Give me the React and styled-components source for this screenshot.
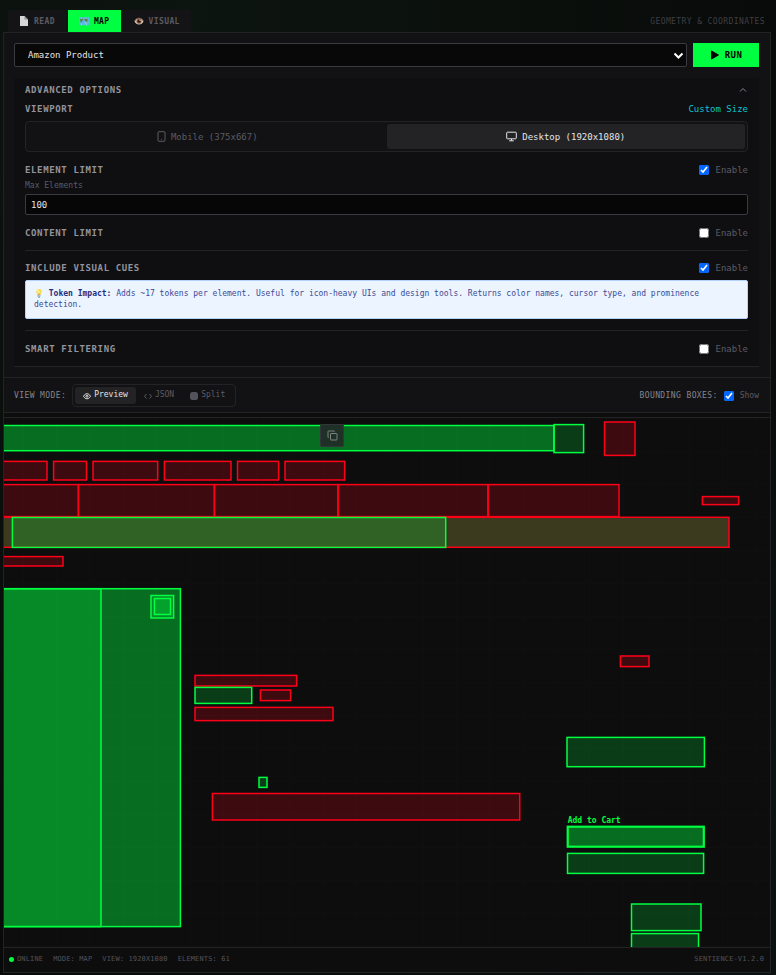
import React, { useState } from 'react';
import styled, { createGlobalStyle, css } from 'styled-components';

const GlobalStyle = createGlobalStyle`
  * {
    box-sizing: border-box;
  }

  body {
    margin: 0;
    background-color: #080a09;
    background-image: radial-gradient(ellipse at 25% 0%, #0d1510 0%, transparent 75%),
      radial-gradient(ellipse at 100% 80%, #0a1413 0%, transparent 50%);
    font-family: "DejaVu Sans Mono", "Noto Color Emoji", monospace;
    color: #e4e4e7;
  }

  button, input, select {
    font-family: inherit;
    margin: 0;
  }
`;

const Page = styled.div`
  padding: 10px 5px 2px 3px;
`;

const TopBar = styled.header`
  display: flex;
  align-items: center;
  justify-content: space-between;
  padding: 0 6px 0 5px;
`;

const TabList = styled.nav`
  display: flex;
  gap: 2px;
`;

const Tab = styled.button`
  display: flex;
  align-items: center;
  gap: 5px;
  height: 22px;
  padding: 0 11px;
  border: 0;
  background: ${({ $active }) => ($active ? '#00ff41' : '#141416')};
  color: ${({ $active }) => ($active ? '#000' : '#5b5b63')};
  font-size: 8px;
  font-weight: 700;
  letter-spacing: 0.05em;
  cursor: pointer;
`;

const Hint = styled.span`
  color: #3f3f46;
  font-size: 8px;
  letter-spacing: 0.05em;
`;

const Panel = styled.main`
  border: 1px solid #232326;
  background: #0d0d0d;
`;

const Controls = styled.section`
  padding: 10px 11px 10px 10px;
  background: #121214;
  border-bottom: 1px solid #232326;
`;

const RunRow = styled.div`
  display: flex;
  gap: 6px;
  margin-bottom: 11px;
`;

const SelectWrap = styled.div`
  position: relative;
  flex: 1;

  svg {
    position: absolute;
    right: 3px;
    top: 7px;
    pointer-events: none;
  }
`;

const SiteSelect = styled.select`
  appearance: none;
  display: block;
  width: 100%;
  height: 24px;
  padding: 0 13px;
  border: 1px solid #3a3a40;
  border-radius: 2px;
  background: #080808;
  color: #e4e4e7;
  font-size: 9px;
`;

const RunButton = styled.button`
  display: flex;
  align-items: center;
  justify-content: center;
  gap: 5px;
  width: 66px;
  height: 24px;
  padding: 0;
  border: 0;
  background: #00ff41;
  color: #000;
  font-size: 9px;
  font-weight: 700;
  letter-spacing: 0.05em;
  cursor: pointer;
`;

const Options = styled.div`
  display: flex;
  flex-direction: column;
  padding: 5px 11px 10px;
  border-bottom: 1px solid #232326;
  background: #0f0f11;
`;

const OptionRow = styled.div`
  display: flex;
  align-items: center;
  justify-content: space-between;
  height: 14px;
  margin-bottom: ${({ $gap }) => $gap || 0}px;
`;

const OptionTitle = styled.h3`
  margin: 0;
  color: #93939c;
  font-size: 9px;
  font-weight: 700;
  letter-spacing: 0.07em;
`;

const PlainButton = styled.button`
  display: flex;
  padding: 0;
  border: 0;
  background: none;
  color: ${({ $color }) => $color};
  font-size: 9px;
  cursor: pointer;
`;

const Segmented = styled.div`
  display: flex;
  border: 1px solid #232326;
  border-radius: 4px;
  padding: 2px;
  background: #121214;
`;

const ViewportGroup = styled(Segmented)`
  height: 31px;
  margin-bottom: 11px;
`;

const segment = css`
  display: flex;
  align-items: center;
  justify-content: center;
  border: 0;
  border-radius: 3px;
  background: ${({ $active }) => ($active ? '#232325' : 'transparent')};
  color: ${({ $active }) => ($active ? '#e4e4e7' : '#5b5b63')};
  cursor: pointer;
`;

const ViewportButton = styled.button`
  ${segment}
  flex: 1;
  gap: 5px;
  font-size: 9px;
`;

const ModeGroup = styled(Segmented)`
  height: 23px;
`;

const ModeButton = styled.button`
  ${segment}
  gap: 3px;
  padding: 0 8px 2px;
  font-size: 8px;

  svg {
    margin-top: 2px;
  }
`;

const CheckLabel = styled.label`
  display: flex;
  align-items: center;
  gap: 6px;
  color: #5b5b63;
  font-size: ${({ $small }) => ($small ? 8 : 9)}px;
`;

const Checkbox = styled.input.attrs({ type: 'checkbox' })`
  width: 10px;
  height: 10px;
  accent-color: #0066ff;
`;

const FieldLabel = styled.label`
  height: 12px;
  margin: 3px 0 2px;
  color: #5b5b63;
  font-size: 8px;
  line-height: 12px;
`;

const LimitInput = styled.input`
  width: 100%;
  height: 21px;
  margin-bottom: 11px;
  padding: 0 5px;
  border: 1px solid #3a3a40;
  border-radius: 2px;
  background: #060606;
  color: #e4e4e7;
  font-size: 9px;
`;

const Divider = styled.hr`
  width: 100%;
  height: 1px;
  margin: 0 0 ${({ $after }) => $after}px;
  border: 0;
  background: #232326;
`;

const Notice = styled.p`
  min-height: 39px;
  margin: 0 0 11px;
  padding: 7px 8px;
  border: 1px solid #b4d3fb;
  border-radius: 2px;
  background: #ecf4ff;
  color: #3b4a94;
  font-size: 8px;
  line-height: 11px;

  strong {
    color: #1e2f80;
  }
`;

const Bulb = styled.span`
  opacity: 0.7;
`;

const ViewBar = styled.section`
  display: flex;
  align-items: center;
  justify-content: space-between;
  padding: 6px 11px 5px 10px;
  border-bottom: 1px solid #232326;
  background: #121214;
`;

const BarGroup = styled.div`
  display: flex;
  align-items: center;
  gap: 6px;
`;

const BarLabel = styled.span`
  color: #85858e;
  font-size: 8px;
  letter-spacing: 0.05em;
`;

const Preview = styled.section`
  position: relative;
  margin-top: 4px;
  border-top: 1px solid #232326;
  background-color: #0d0d0d;
  background-image: linear-gradient(#0f0f0f 1px, transparent 1px),
    linear-gradient(90deg, #0f0f0f 1px, transparent 1px);
  background-size: calc(100% / 23) 33px;
  background-position: 19px 0;
`;

const Overlay = styled.svg`
  display: block;
  width: 100%;
  height: auto;
  font-family: "DejaVu Sans Mono", monospace;
  font-size: 8px;
  font-weight: 700;
`;

const CopyButton = styled.button`
  position: absolute;
  top: 6px;
  left: 316px;
  display: flex;
  align-items: center;
  justify-content: center;
  width: 24px;
  height: 23px;
  padding: 0;
  border: 1px solid #32353a;
  border-radius: 2px;
  background: #1f3127;
  color: #7c8480;
  cursor: pointer;
`;

const StatusBar = styled.footer`
  display: flex;
  align-items: center;
  justify-content: space-between;
  height: 25px;
  padding: 0 6px 2px 5px;
  border-top: 1px solid #232326;
  color: #52525b;
  font-size: 7px;
  letter-spacing: 0.02em;
`;

const StatusList = styled.div`
  display: flex;
  gap: 10px;
`;

const Online = styled.span`
  display: flex;
  align-items: center;
  gap: 3px;

  &::before {
    content: "";
    width: 5px;
    height: 5px;
    border-radius: 50%;
    background: #00ff41;
  }
`;

const GREEN = '#00ff41';
const RED = '#ff0019';

// x1, y1, x2, y2 of every detected element, drawn in order
const boxes = [
  { c: GREEN, at: [-10, 425.5, 554, 450.7], fill: 0.4 },
  { c: GREEN, at: [554, 424.6, 583.6, 452.6] },
  { c: RED, at: [604.5, 422, 635, 455.4] },
  { c: RED, at: [-10, 461.4, 47, 480] },
  { c: RED, at: [53.6, 461.4, 86.5, 480] },
  { c: RED, at: [93, 461.4, 157.7, 480] },
  { c: RED, at: [164.4, 461.4, 231, 480] },
  { c: RED, at: [237.5, 461.4, 278.6, 480] },
  { c: RED, at: [285, 461.4, 344.6, 480] },
  { c: RED, at: [-10, 484.6, 78.4, 516.6] },
  { c: RED, at: [78.4, 484.6, 214.4, 516.6] },
  { c: RED, at: [214.4, 484.6, 338, 516.6] },
  { c: RED, at: [338, 484.6, 488, 516.6] },
  { c: RED, at: [488, 484.6, 619, 516.6] },
  { c: RED, at: [702.4, 496.6, 738.6, 504.6] },
  { c: RED, at: [-10, 517.3, 729, 547.3], paint: '#3c3a1e' },
  { c: GREEN, at: [12.4, 517.5, 445.7, 547.4] },
  { c: RED, at: [-10, 556.6, 63, 566] },
  { c: GREEN, at: [-10, 588.7, 180.4, 926.6], fill: 0.4 },
  { c: GREEN, at: [-10, 588.7, 101, 926.6] },
  { c: GREEN, at: [151, 595.5, 173.6, 618] },
  { c: GREEN, at: [154.4, 598.5, 170.5, 614.5] },
  { c: RED, at: [195, 675.4, 296.6, 686] },
  { c: GREEN, at: [195, 687.4, 251.7, 703.4] },
  { c: RED, at: [260.4, 690, 290.6, 700.6] },
  { c: RED, at: [195, 707.4, 333, 720.6] },
  { c: GREEN, at: [259, 777.4, 267, 787.4] },
  { c: RED, at: [212.4, 793.5, 519.7, 820] },
  { c: RED, at: [620.4, 656, 649, 666.6] },
  { c: GREEN, at: [567, 737.4, 704.4, 766.7] },
  { c: GREEN, at: [567.7, 826.7, 703.8, 846.7], fill: 0.4, stroke: 2.2, label: 'Add to Cart' },
  { c: GREEN, at: [567.5, 853.4, 703.6, 873.4] },
  { c: GREEN, at: [631.5, 904, 701, 930.6] },
  { c: GREEN, at: [631.5, 933.6, 698.5, 960] },
];

const PageIcon = () => (
  <svg width="10" height="10" viewBox="0 0 20 20">
    <path d="M2 0h9l7 7v13H2Z" fill="#d6d6d6" />
    <path d="M11 0v7h7Z" fill="#8f8f8f" />
  </svg>
);

const MapIcon = () => (
  <svg width="10" height="10" viewBox="0 0 20 20">
    <path d="M0 2l5 1 5-1 5 1 5-1v16l-5 1-5-1-5 1-5-1Z" fill="#5cb8e6" />
    <path d="M2 6l5-1 2 3-3 2-1 4-2-3ZM11 6l6-1v5l-3 2-2-2Z" fill="#5b7d35" />
    <path d="M5 3v4M15 3v3M5 15v4M15 15v4" stroke="#a5dcf5" />
    <path d="M12 12l2-1 1 4-2 1Z" fill="#d9c860" />
  </svg>
);

const EyeballIcon = () => (
  <svg width="10" height="10" viewBox="0 0 20 20">
    <path d="M1 10.500Q4 4 10 4t9 6.500Q16 17 10 17T1 10.500Z" fill="#d8d0cb" />
    <path d="M1 10.500Q4 4 10 4t9 6.500" fill="none" stroke="#6b4a38" strokeWidth="2" />
    <circle cx="10" cy="10.500" r="5" fill="#8a5230" />
    <circle cx="10" cy="10.500" r="2.500" fill="#1b0f0a" />
    <circle cx="12" cy="8.500" r="1.200" fill="#fff" />
  </svg>
);

const PhoneIcon = () => (
  <svg width="9" height="11" viewBox="0 0 9 11" fill="none" stroke="currentColor">
    <rect x="1" y="0.7" width="7" height="9.6" rx="1" />
    <path d="M4 8.4h1" />
  </svg>
);

const MonitorIcon = () => (
  <svg width="11" height="11" viewBox="0 0 11 11" fill="none" stroke="currentColor">
    <rect x="0.7" y="1.2" width="9.6" height="6.6" rx="0.8" />
    <path d="M5.5 7.8v2M3.2 9.8h4.6" />
  </svg>
);

const EyeIcon = () => (
  <svg width="8" height="8" viewBox="0 0 16 16" fill="none" stroke="currentColor" strokeWidth="2">
    <path d="M1 8.5C3 5 5.5 3.5 8 3.5S13 5 15 8.5C13 12 10.5 13.5 8 13.5S3 12 1 8.5Z" />
    <circle cx="8" cy="8.5" r="2" />
  </svg>
);

const CodeIcon = () => (
  <svg width="8" height="8" viewBox="0 0 16 16" fill="none" stroke="currentColor" strokeWidth="2">
    <path d="M5 4L1 8.5l4 4.5M11 4l4 4.5L11 13" />
  </svg>
);

const SplitIcon = () => (
  <svg width="8" height="8" viewBox="0 0 8 8" fill="currentColor">
    <rect width="8" height="8" rx="2.5" opacity="0.9" />
  </svg>
);

const modes = [
  { name: 'Preview', Icon: EyeIcon },
  { name: 'JSON', Icon: CodeIcon },
  { name: 'Split', Icon: SplitIcon },
];

const tabs = [
  { name: 'READ', Icon: PageIcon },
  { name: 'MAP', Icon: MapIcon },
  { name: 'VISUAL', Icon: EyeballIcon },
];

const Toggle = ({ title, checked, onChange }) => (
  <CheckLabel>
    <Checkbox checked={checked} onChange={onChange} aria-label={`${title}: enable`} />
    Enable
  </CheckLabel>
);

const App = () => {
  const [tab, setTab] = useState('MAP');
  const [mode, setMode] = useState('Preview');
  const [viewport, setViewport] = useState('desktop');
  const [limit, setLimit] = useState('100');
  const [showBoxes, setShowBoxes] = useState(true);
  const [options, setOptions] = useState({ element: true, content: false, cues: true, smart: false });

  const flip = (key) => () => setOptions({ ...options, [key]: !options[key] });

  return (
    <Page>
      <GlobalStyle />
      <TopBar>
        <TabList>
          {tabs.map(({ name, Icon }) => (
            <Tab key={name} $active={tab === name} onClick={() => setTab(name)}>
              <Icon />
              {name}
            </Tab>
          ))}
        </TabList>
        <Hint>GEOMETRY &amp; COORDINATES</Hint>
      </TopBar>

      <Panel>
        <Controls>
          <RunRow>
            <SelectWrap>
              <SiteSelect aria-label="Example site">
                <option>Amazon Product</option>
              </SiteSelect>
              <svg width="11" height="11" viewBox="0 0 11 11" fill="none" stroke="#fff" strokeWidth="2">
                <path d="M1.5 3.5l4 4 4-4" />
              </svg>
            </SelectWrap>
            <RunButton>
              <svg width="10" height="10" viewBox="0 0 10 10" stroke="#000" strokeLinejoin="round">
                <path d="M1.5 1l7 4-7 4Z" />
              </svg>
              RUN
            </RunButton>
          </RunRow>

          <Options>
            <OptionRow $gap={5}>
              <OptionTitle>ADVANCED OPTIONS</OptionTitle>
              <PlainButton $color="#85858e" aria-label="Collapse">
                <svg width="10" height="10" viewBox="0 0 10 10" fill="none" stroke="currentColor">
                  <path d="M2 6.5l3-3 3 3" />
                </svg>
              </PlainButton>
            </OptionRow>
            <OptionRow $gap={5}>
              <OptionTitle>VIEWPORT</OptionTitle>
              <PlainButton $color="#0cc4cf">Custom Size</PlainButton>
            </OptionRow>
            <ViewportGroup>
              <ViewportButton $active={viewport === 'mobile'} onClick={() => setViewport('mobile')}>
                <PhoneIcon /> Mobile (375x667)
              </ViewportButton>
              <ViewportButton $active={viewport === 'desktop'} onClick={() => setViewport('desktop')}>
                <MonitorIcon /> Desktop (1920x1080)
              </ViewportButton>
            </ViewportGroup>

            <OptionRow>
              <OptionTitle>ELEMENT LIMIT</OptionTitle>
              <Toggle title="Element limit" checked={options.element} onChange={flip('element')} />
            </OptionRow>
            <FieldLabel htmlFor="max-elements">Max Elements</FieldLabel>
            <LimitInput id="max-elements" value={limit} onChange={(e) => setLimit(e.target.value)} />

            <OptionRow $gap={10}>
              <OptionTitle>CONTENT LIMIT</OptionTitle>
              <Toggle title="Content limit" checked={options.content} onChange={flip('content')} />
            </OptionRow>
            <Divider $after={10} />

            <OptionRow $gap={5}>
              <OptionTitle>INCLUDE VISUAL CUES</OptionTitle>
              <Toggle title="Visual cues" checked={options.cues} onChange={flip('cues')} />
            </OptionRow>
            <Notice>
              <Bulb>💡</Bulb> <strong>Token Impact:</strong> Adds ~17 tokens per element. Useful for
              icon-heavy UIs and design tools. Returns color names, cursor type, and prominence detection.
            </Notice>
            <Divider $after={11} />

            <OptionRow>
              <OptionTitle>SMART FILTERING</OptionTitle>
              <Toggle title="Smart filtering" checked={options.smart} onChange={flip('smart')} />
            </OptionRow>
          </Options>
        </Controls>

        <ViewBar>
          <BarGroup>
            <BarLabel>VIEW MODE:</BarLabel>
            <ModeGroup>
              {modes.map(({ name, Icon }) => (
                <ModeButton key={name} $active={mode === name} onClick={() => setMode(name)}>
                  <Icon />
                  {name}
                </ModeButton>
              ))}
            </ModeGroup>
          </BarGroup>
          <BarGroup>
            <BarLabel>BOUNDING BOXES:</BarLabel>
            <CheckLabel $small>
              <Checkbox checked={showBoxes} onChange={() => setShowBoxes(!showBoxes)} />
              Show
            </CheckLabel>
          </BarGroup>
        </ViewBar>

        <Preview>
          <Overlay viewBox="4 418 766 529">
            {showBoxes &&
              boxes.map(({ c, at: [x1, y1, x2, y2], fill = 0.2, stroke = 1.5, paint, label }, i) => (
                <g key={i}>
                  <rect
                    x={x1}
                    y={y1}
                    width={x2 - x1}
                    height={y2 - y1}
                    fill={paint || c}
                    fillOpacity={paint ? 1 : fill}
                    stroke={c}
                    strokeWidth={stroke}
                  />
                  {label && (
                    <text x={x1} y={y1 - 4} fill={c}>
                      {label}
                    </text>
                  )}
                </g>
              ))}
          </Overlay>
          <CopyButton aria-label="Copy">
            <svg width="11" height="11" viewBox="0 0 11 11" fill="none" stroke="currentColor">
              <rect x="3.5" y="3.5" width="6.5" height="6.5" rx="0.5" />
              <path d="M1.5 7.5H1V1.5Q1 1 1.5 1H7.5V1.5" />
            </svg>
          </CopyButton>
        </Preview>

        <StatusBar>
          <StatusList>
            <Online>ONLINE</Online>
            <span>MODE: MAP</span>
            <span>VIEW: 1920X1080</span>
            <span>ELEMENTS: 61</span>
          </StatusList>
          <span>SENTIENCE-V1.2.0</span>
        </StatusBar>
      </Panel>
    </Page>
  );
};

export default App;
